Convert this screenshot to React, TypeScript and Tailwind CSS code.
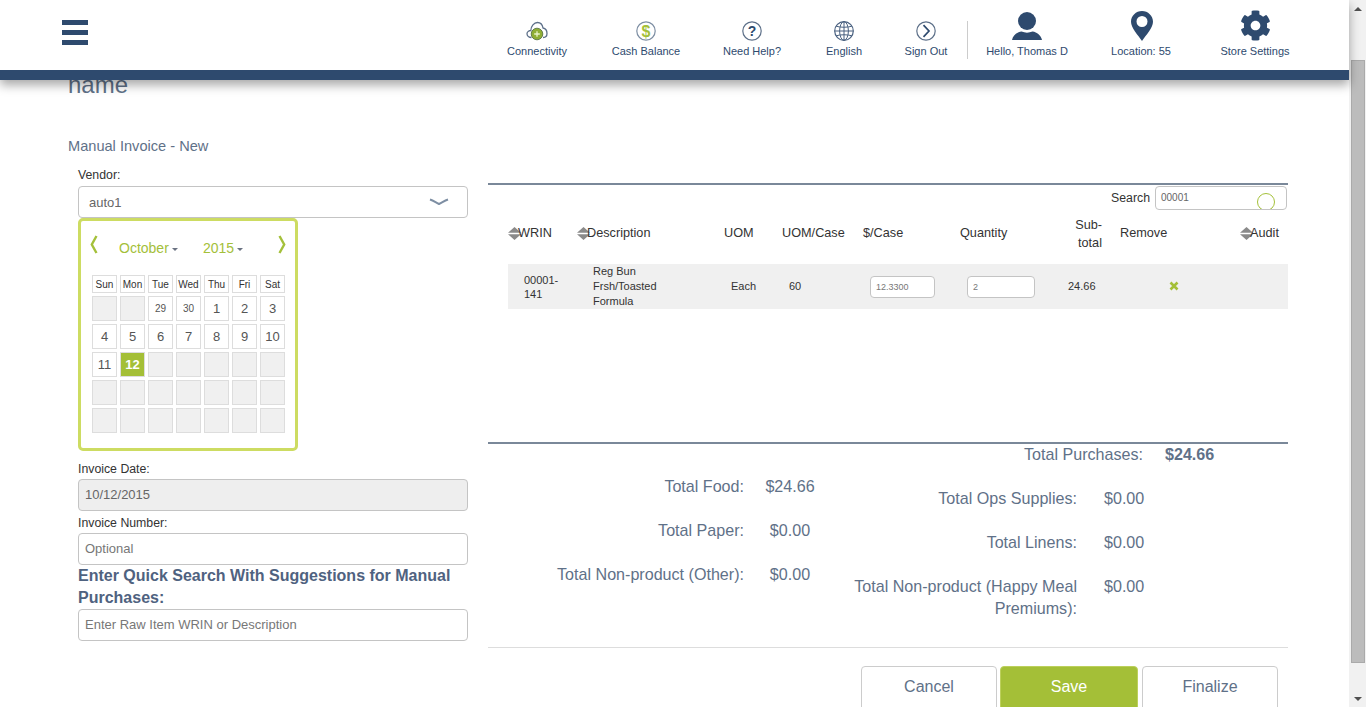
import { FaCog } from 'react-icons/fa'

const font = { sans: "font-['Liberation_Sans',Arial,sans-serif]" }

const Cloud = () => (
  <svg width="22" height="20" viewBox="0 0 22 20">
    <path
      d="M5.500 16.500C3 16.500 1 14.800 1 12.800C1 10.800 3 9.500 4.800 9.500C5 5.200 8 1.500 11.500 1.500C14.500 1.500 16.500 4 17 7C19.500 7.500 21 10 21 12.500C21 14.800 19.500 16.500 17 16.500"
      fill="none"
      stroke="#5d7089"
      strokeWidth="1.3"
    />
    <circle cx="11" cy="13" r="5.800" fill="#8fae34" stroke="#4d6a3a" strokeWidth="0.8" />
    <path d="M8.200 13h5.600M11 10.200v5.600" stroke="#e8f2c8" strokeWidth="1.3" />
  </svg>
)

const Dollar = () => (
  <svg width="20" height="20" viewBox="0 0 20 20">
    <circle cx="10" cy="10" r="9.200" fill="none" stroke="#7d8ea3" strokeWidth="1.200" />
    <text x="10" y="15.500" textAnchor="middle" fontSize="16" fontWeight="700" fontFamily="Liberation Sans" fill="#a4c03a">
      $
    </text>
  </svg>
)

const Help = () => (
  <svg width="20" height="20" viewBox="0 0 20 20">
    <circle cx="10" cy="10" r="9.200" fill="none" stroke="#5d7089" strokeWidth="1.200" />
    <text x="10" y="15" textAnchor="middle" fontSize="14" fontWeight="700" fontFamily="Liberation Sans" fill="#2e4a6e">
      ?
    </text>
  </svg>
)

const Globe = () => (
  <svg width="20" height="20" viewBox="0 0 20 20" fill="none" stroke="#4a6180" strokeWidth="1">
    <circle cx="10" cy="10" r="9.300" strokeWidth="1.200" />
    <ellipse cx="10" cy="10" rx="4.400" ry="9.300" />
    <path d="M10 .7v18.600M.7 10h18.600M2.200 5.200c4 1.400 11.600 1.400 15.600 0M2.200 14.800c4-1.400 11.600-1.400 15.600 0" />
  </svg>
)

const SignOut = () => (
  <svg width="20" height="20" viewBox="0 0 20 20" fill="none">
    <circle cx="10" cy="10" r="9.200" stroke="#5d7089" strokeWidth="1.200" />
    <path d="M7.500 4.200L13 10l-5.500 5.800" stroke="#2e4a6e" strokeWidth="1.700" />
  </svg>
)

const User = () => (
  <svg width="30" height="29" viewBox="0 0 30 29" fill="#2e4a6e">
    <circle cx="15" cy="9" r="9" />
    <path d="M0 28c1-4.500 5-8 9.500-8.500 3.500 1.500 7.500 1.500 11 0C25 20 29 23.500 30 28z" />
  </svg>
)

const Pin = () => (
  <svg width="22" height="30" viewBox="0 0 22 30" className="ml-px">
    <path
      fillRule="evenodd"
      fill="#2e4a6e"
      d="M11 0C5 0 0 4.800 0 10.800 0 17 7 24 11 30c4-6 11-13 11-19.200C22 4.800 17 0 11 0zm0 5a5.500 5.500 0 1 1 0 11 5.500 5.500 0 0 1 0-11z"
    />
  </svg>
)

const SortIcon = () => (
  <svg width="13" height="13" viewBox="0 0 13 13" className="-mr-[3px] shrink-0" fill="#8a8a8a">
    <path d="M6.500 0L13 5.800H0zM6.500 13L0 7.200h13z" />
  </svg>
)

const Chevron = ({ flip }: { flip?: boolean }) => (
  <svg width="8" height="19" viewBox="0 0 8 19" fill="none" className={flip ? 'rotate-180' : ''}>
    <path d="M6.500 1L1.800 9.500l4.700 8.500" stroke="#a4c03a" strokeWidth="2.400" />
  </svg>
)

const Caret = () => <span className="inline-block ml-[3px] mb-[2px] border-x-[3px] border-t-[3px] border-x-transparent border-t-gray-500" />

const NavItem = ({ w, icon, label }: { w: string; icon: any; label: string }) => (
  <div className={`flex flex-col items-center ${w}`}>
    <div className="flex items-end justify-center h-[35px]">{icon}</div>
    <div className="mt-[3px] text-[11px] leading-[14px] text-[#2e4a6e] whitespace-nowrap">{label}</div>
  </div>
)

const days = ['Sun', 'Mon', 'Tue', 'Wed', 'Thu', 'Fri', 'Sat']
const cells: (number | null)[] = [
  null, null, 29, 30, 1, 2, 3,
  4, 5, 6, 7, 8, 9, 10,
  11, 12, null, null, null, null, null,
  null, null, null, null, null, null, null,
  null, null, null, null, null, null, null,
]

const Calendar = () => (
  <div className="w-[220px] h-[233px] border-[3px] border-[#cddc62] rounded-[5px] bg-white">
    <div className="flex items-center h-[46px] pl-[9px] pr-[9px]">
      <Chevron />
      <div className="ml-[21px] w-[84px] text-[14px] text-[#a4c03a] whitespace-nowrap mt-[8px]">
        October
        <Caret />
      </div>
      <div className="text-[14px] text-[#a4c03a] whitespace-nowrap mt-[8px]">
        2015
        <Caret />
      </div>
      <div className="ml-auto">
        <Chevron flip />
      </div>
    </div>
    <div className="grid grid-cols-[repeat(7,25px)] gap-x-[3px] ml-[11px] mt-[8px]">
      {days.map((d) => (
        <div key={d} className="h-[18px] border border-[#ddd] flex items-center justify-center text-[10px] text-[#333]">
          {d}
        </div>
      ))}
    </div>
    <div className="grid grid-cols-[repeat(7,25px)] auto-rows-[25px] gap-[3px] ml-[11px] mt-[3px]">
      {cells.map((c, i) => {
        if (c === 12)
          return (
            <div key={i} className="border border-[#ddd] bg-[#a4bf37] flex items-center justify-center text-[13px] font-bold text-white">
              12
            </div>
          )
        if (c === null) return <div key={i} className="border border-[#ddd] bg-[#f0f0f0]" />
        return (
          <div
            key={i}
            className={`border border-[#ddd] flex items-center justify-center text-[#555] ${c > 20 && c < 31 ? 'text-[10px]' : 'text-[13px]'}`}
          >
            {c}
          </div>
        )
      })}
    </div>
  </div>
)

const Field = ({ value, placeholder, disabled }: { value?: string; placeholder?: string; disabled?: boolean }) => (
  <input
    readOnly
    value={value}
    placeholder={placeholder}
    className={`block w-full h-[32px] px-[6px] pb-[2px] border border-[#c4c4c4] rounded-[4px] text-[13px] outline-none placeholder:text-[#777] ${
      disabled ? 'bg-[#eee] text-[#666]' : 'bg-white text-[#666]'
    }`}
  />
)

const TotalLeft = ({ label, value }: { label: string; value: string }) => (
  <div className="flex h-[44px]">
    <div className="w-[256px] text-right">{label}</div>
    <div className="w-[92px] text-center">{value}</div>
  </div>
)

const TotalRight = ({ label, value }: { label: string; value: string }) => (
  <div className="flex min-h-[44px]">
    <div className="w-[239px] text-right leading-[22px]">{label}</div>
    <div className="pl-[27px] leading-[22px]">{value}</div>
  </div>
)

const Button = ({ label, primary }: { label: string; primary?: boolean }) => (
  <div
    className={`h-[50px] flex items-start justify-center pt-[8px] rounded-[4px] border text-[16px] ${
      primary ? 'w-[138px] bg-[#a4bf37] border-[#bcd05c] text-white' : 'w-[136px] bg-white border-[#ccc] text-[#5f7188]'
    }`}
  >
    {label}
  </div>
)

export default function App() {
  return (
    <div className={`flex h-[707px] overflow-hidden bg-white ${font.sans}`}>
      <div className="w-[1349px] shrink-0 flex flex-col">
        <header className="relative z-10 bg-white shadow-[0_5px_10px_rgba(0,0,0,0.35)]">
          <div className="flex items-center justify-between h-[70px] pl-[62px] pr-[35px]">
            <div className="flex flex-col gap-[5px] w-[26px] -mt-[5px]">
              <div className="h-[5px] bg-[#2e4a6e]" />
              <div className="h-[5px] bg-[#2e4a6e]" />
              <div className="h-[5px] bg-[#2e4a6e]" />
            </div>
            <div className="flex items-start h-[58px]">
              <NavItem w="w-[108px]" icon={<Cloud />} label="Connectivity" />
              <NavItem w="w-[110px]" icon={<Dollar />} label="Cash Balance" />
              <NavItem w="w-[102px]" icon={<Help />} label="Need Help?" />
              <NavItem w="w-[82px]" icon={<Globe />} label="English" />
              <NavItem w="w-[82px]" icon={<SignOut />} label="Sign Out" />
              <div className="w-px h-[38px] mt-[15px] bg-[#ccc]" />
              <NavItem w="w-[118px]" icon={<User />} label="Hello, Thomas D" />
              <NavItem w="w-[110px]" icon={<Pin />} label="Location: 55" />
              <NavItem w="w-[118px]" icon={<FaCog size={31} color="#2e4a6e" />} label="Store Settings" />
            </div>
          </div>
          <div className="h-[10px] bg-[#2e4a6e]" />
        </header>

        <main className="flex-1 min-h-0 pl-[68px] pr-[61px]">
          <h1 className="-mt-[9px] text-[24px] leading-[28px] text-[#5f7188]">name</h1>
          <div className="mt-[37px] text-[14.6px] leading-[20px] text-[#5f7188]">Manual Invoice - New</div>

          <div className="flex mt-[11px] pl-[10px]">
            <div className="w-[390px] shrink-0">
              <div className="text-[12.3px] leading-[16px] text-[#333]">Vendor:</div>
              <div className="flex items-center justify-between h-[32px] mt-[3px] pl-[10px] pr-[18px] border border-[#c4c4c4] rounded-[4px] text-[13px] text-[#666]">
                <span className="mt-[2px]">auto1</span>
                <svg width="20" height="8" viewBox="0 0 20 8" fill="none">
                  <path d="M1 1.500c3 1 6 3 9 4.500 3-1.500 6-3.500 9-4.500" stroke="#7d8ea3" strokeWidth="2" />
                </svg>
              </div>
              <Calendar />
              <div className="mt-[10px] mb-[2px] text-[12.3px] leading-[16px] text-[#333]">Invoice Date:</div>
              <Field value="10/12/2015" disabled />
              <div className="mt-[4px] mb-[2px] text-[12.3px] leading-[16px] text-[#333]">Invoice Number:</div>
              <Field placeholder="Optional" />
              <div className="text-[16px] leading-[22px] font-bold text-[#4f6280]">
                Enter Quick Search With Suggestions for Manual Purchases:
              </div>
              <Field placeholder="Enter Raw Item WRIN or Description" />
            </div>

            <div className="w-[800px] ml-[20px] mt-[16px]">
              <div className="h-[2px] bg-[#7a8899]" />
              <div className="flex items-center justify-end h-[24px] mt-px pr-px">
                <span className="text-[12.3px] text-[#333] mr-[5px]">Search</span>
                <div className="relative w-[132px] h-[24px] overflow-hidden border border-[#c4c4c4] rounded-[4px] pl-[5px] text-[10px] leading-[22px] text-[#666]">
                  00001
                  <span className="absolute left-[101px] top-[6px] w-[18px] h-[18px] rounded-full border-[1.5px] border-[#a4c03a]" />
                </div>
              </div>

              <div className="grid grid-cols-[69px_147px_58px_81px_97px_108px_52px_120px_48px] ml-[20px] h-[54px] pb-[7px] items-center text-[12.7px] text-[#333]">
                <div className="flex items-center"><SortIcon />WRIN</div>
                <div className="flex items-center"><SortIcon />Description</div>
                <div>UOM</div>
                <div>UOM/Case</div>
                <div>$/Case</div>
                <div>Quantity</div>
                <div className="w-[34px] text-right leading-[18px]">Sub-total</div>
                <div>Remove</div>
                <div className="flex items-center"><SortIcon />Audit</div>
              </div>

              <div className="grid grid-cols-[69px_147px_58px_81px_97px_108px_52px_120px_48px] ml-[20px] h-[45px] items-center bg-[#f0f0f0] text-[11px] text-[#333]">
                <div className="pl-[16px] pr-[8px] leading-[14px]">00001-141</div>
                <div className="pl-[16px] pr-[50px] leading-[15px]">Reg Bun Frsh/Toasted Formula</div>
                <div className="pl-[7px]">Each</div>
                <div className="pl-[7px]">60</div>
                <div className="pl-[7px]">
                  <input readOnly value="12.3300" className="block w-[65px] h-[22px] px-[5px] bg-white border border-[#c4c4c4] rounded-[4px] text-[9px] text-[#777] outline-none" />
                </div>
                <div className="pl-[7px]">
                  <input readOnly value="2" className="block w-[68px] h-[22px] px-[5px] bg-white border border-[#c4c4c4] rounded-[4px] text-[9px] text-[#777] outline-none" />
                </div>
                <div>24.66</div>
                <div className="pl-[49px]">
                  <svg width="10" height="10" viewBox="0 0 10 10" className="-mt-[2px]">
                    <path d="M1.500 1.500l7 7M8.500 1.500l-7 7" stroke="#a4bf37" strokeWidth="2.600" />
                  </svg>
                </div>
                <div />
              </div>

              <div className="h-[2px] mt-[133px] bg-[#7a8899]" />

              <div className="-mt-px text-[16.1px] text-[#5f7188]">
                <div className="flex h-[22px] leading-[22px]">
                  <div className="w-[655px] text-right">Total Purchases:</div>
                  <div className="ml-[22px] font-bold">$24.66</div>
                </div>
                <div className="flex">
                  <div className="w-[350px] pt-[10px] leading-[22px] shrink-0">
                    <TotalLeft label="Total Food:" value="$24.66" />
                    <TotalLeft label="Total Paper:" value="$0.00" />
                    <TotalLeft label="Total Non-product (Other):" value="$0.00" />
                  </div>
                  <div className="pt-[22px]">
                    <TotalRight label="Total Ops Supplies:" value="$0.00" />
                    <TotalRight label="Total Linens:" value="$0.00" />
                    <TotalRight label="Total Non-product (Happy Meal Premiums):" value="$0.00" />
                  </div>
                </div>
              </div>

              <div className="h-px mt-[28px] bg-[#ddd]" />
              <div className="flex justify-end gap-[3px] mt-[18px] pr-[10px]">
                <Button label="Cancel" />
                <Button label="Save" primary />
                <div className="ml-px">
                  <Button label="Finalize" />
                </div>
              </div>
            </div>
          </div>
        </main>
      </div>

      <div className="w-[17px] shrink-0 flex flex-col items-center bg-[#f1f1f1]">
        <div className="h-[17px] flex items-center justify-center">
          <span className="border-x-[4px] border-b-[4px] border-x-transparent border-b-[#505050]" />
        </div>
        <div className="mt-[43px] w-[14px] h-[603px] bg-[#bcbcbc] border border-[#aaa]" />
        <div className="mt-auto h-[17px] flex items-center justify-center">
          <span className="border-x-[4px] border-t-[4px] border-x-transparent border-t-[#505050]" />
        </div>
      </div>
    </div>
  )
}
